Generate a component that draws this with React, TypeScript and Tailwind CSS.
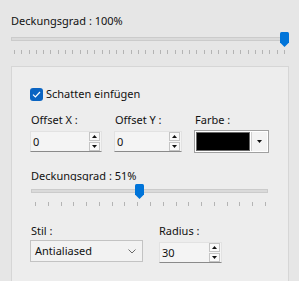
import React from 'react';

// thumb shaped like the windows trackbar pointer
const Thumb = () => (
    <svg width="9" height="15" viewBox="0 0 9 15" className="block">
        <path d="M1.5 0 H7.5 Q9 0 9 1.5 V10.5 L4.5 15 L0 10.5 V1.5 Q0 0 1.5 0 Z" fill="#0074d9" />
    </svg>
);

interface SliderProps {
    width: number;
    thumbLeft: number;
    tickStart: number;
    tickEnd: number;
    tickCount: number;
}

const Slider: React.FC<SliderProps> = ({ width, thumbLeft, tickStart, tickEnd, tickCount }) => {
    const ticks = Array.from({ length: tickCount }, (_, i) =>
        Math.round(tickStart + ((tickEnd - tickStart) * i) / (tickCount - 1))
    );
    return (
        <div style={{ width }}>
            <div className="relative h-[15px]">
                <div className="absolute left-0 right-0 top-[5px] h-[4px] bg-[#dadada] border border-[#cbcbcb]" />
                <div className="absolute top-0" style={{ left: thumbLeft }}>
                    <Thumb />
                </div>
            </div>
            <div className="relative h-[4px] mt-[3px]">
                {ticks.map((x, i) => (
                    <div key={i} className="absolute top-0 w-px h-[4px] bg-[#b4b4b4]" style={{ left: x }} />
                ))}
            </div>
        </div>
    );
};

const Spin = () => (
    <div className="flex flex-col gap-px w-[11px] mr-[1px]">
        <div className="h-[9px] flex items-center justify-center bg-[#fafafa] border border-[#c4c4c4]">
            <svg width="5" height="3" viewBox="0 0 5 3"><path d="M0 3 L2.5 0 L5 3 Z" fill="#111" /></svg>
        </div>
        <div className="h-[9px] flex items-center justify-center bg-[#fafafa] border border-[#c4c4c4]">
            <svg width="5" height="3" viewBox="0 0 5 3"><path d="M0 0 L2.5 3 L5 0 Z" fill="#111" /></svg>
        </div>
    </div>
);

const NumberBox: React.FC<{ value: string; width: number; height: number }> = ({ value, width, height }) => (
    <div
        className="flex items-center bg-[#f4f4f4] border border-[#e2e2e2] border-b-[#8a8a8a]"
        style={{ width, height }}
    >
        <span className="flex-1 pl-[2px] leading-4">{value}</span>
        <Spin />
    </div>
);

export default function App() {
    return (
        <div className="w-[299px] h-[281px] overflow-hidden bg-[#e6e6e6] text-[11px] text-[#111] font-['Noto_Sans',sans-serif]">
            <div className="pl-[11px] pt-[13px]">
                <div className="h-4 leading-4">Deckungsgrad : 100%</div>
                <div className="mt-[3px]">
                    <Slider width={278} thumbLeft={269} tickStart={3} tickEnd={273} tickCount={38} />
                </div>
            </div>

            <div className="ml-[11px] mt-[12px] w-[278px] h-[230px] bg-[#ededed] border border-[#d6d6d6] pl-[18px] pt-[19px]">
                {/* Schatten */}
                <div className="flex items-center h-4 gap-[3px]">
                    <div className="w-[13px] h-[13px] rounded-[3px] bg-[#0a64c2] flex items-center justify-center">
                        <svg width="9" height="7" viewBox="0 0 9 7">
                            <path d="M1 3.6 L3.4 6 L8 1" fill="none" stroke="#fff" strokeWidth="1.2" />
                        </svg>
                    </div>
                    <span className="leading-4">Schatten einfügen</span>
                </div>

                {/* Offset / Farbe */}
                <div className="flex mt-[10px]">
                    <div className="w-[84px]">
                        <div className="h-4 leading-4 pl-px">Offset X :</div>
                        <div className="mt-[3px]">
                            <NumberBox value="0" width={72} height={21} />
                        </div>
                    </div>
                    <div className="w-[80px]">
                        <div className="h-4 leading-4 pl-px">Offset Y :</div>
                        <div className="mt-[3px]">
                            <NumberBox value="0" width={68} height={21} />
                        </div>
                    </div>
                    <div>
                        <div className="h-4 leading-4 pl-px">Farbe :</div>
                        <div className="mt-[2px] w-[75px] h-[23px] flex border border-[#a0a0a0] bg-white p-[1px]">
                            <div className="flex-1 bg-black border border-[#6a6a6a]" />
                            <div className="w-[16px] ml-[1px] flex items-center justify-center bg-[#f3f3f3] border-l border-[#d0d0d0]">
                                <svg width="5" height="3" viewBox="0 0 5 3"><path d="M0 0 L2.5 3 L5 0 Z" fill="#111" /></svg>
                            </div>
                        </div>
                    </div>
                </div>

                {/* Deckungsgrad 51% — label clipped at baseline like the original */}
                <div className="mt-[15px] h-[13px] overflow-hidden leading-4 pl-px">Deckungsgrad : 51%</div>
                <div className="mt-[3px] ml-px">
                    <Slider width={237} thumbLeft={104} tickStart={4} tickEnd={234} tickCount={19} />
                </div>

                {/* Stil / Radius */}
                <div className="flex gap-[16px] mt-[17px]">
                    <div>
                        <div className="h-4 leading-4 pl-px">Stil :</div>
                        <div className="mt-[1px] w-[113px] h-[22px] flex items-center bg-[#f2f2f2] border border-[#c3c3c3] pl-[4px] pr-[6px]">
                            <span className="flex-1 leading-4">Antialiased</span>
                            <svg width="8" height="5" viewBox="0 0 8 5">
                                <path d="M0.5 0.5 L4 4 L7.5 0.5" fill="none" stroke="#6a6a6a" strokeWidth="1" />
                            </svg>
                        </div>
                    </div>
                    <div>
                        <div className="h-4 leading-4">Radius :</div>
                        <div className="mt-[3px]">
                            <NumberBox value="30" width={63} height={21} />
                        </div>
                    </div>
                </div>
            </div>
        </div>
    );
}
